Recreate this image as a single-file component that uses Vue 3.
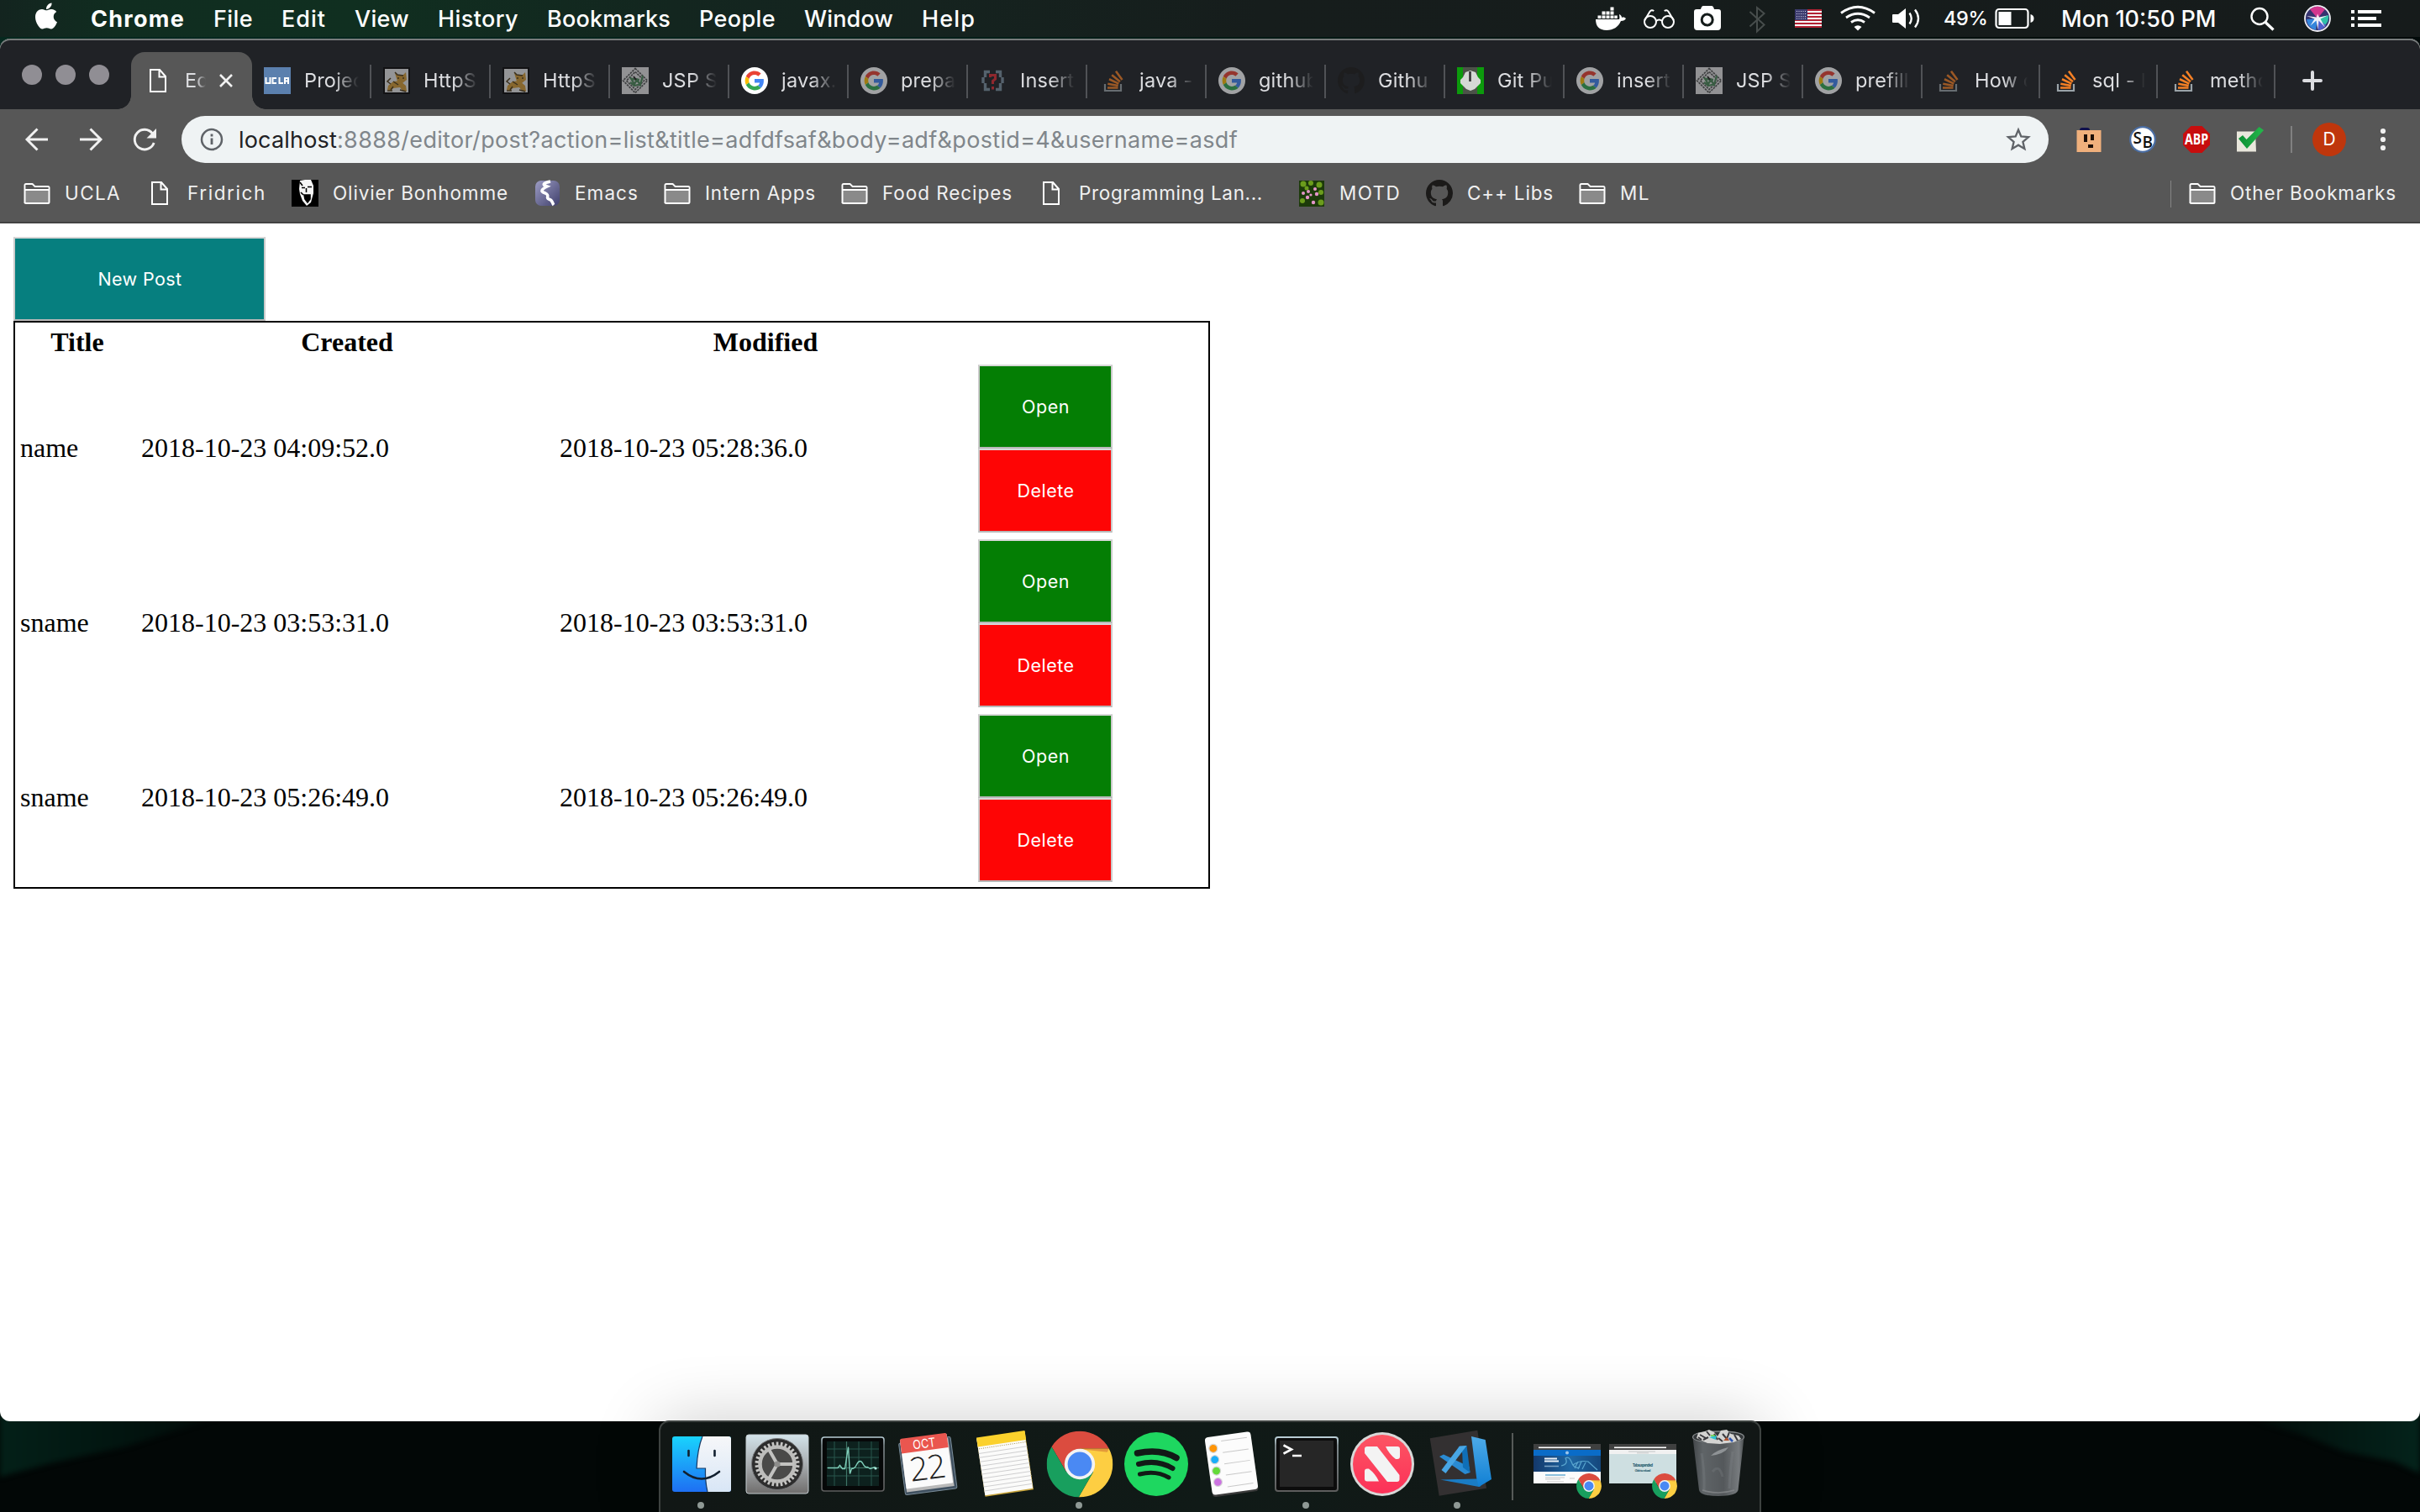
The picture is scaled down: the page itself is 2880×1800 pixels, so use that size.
<script setup>
const menus = [
  { label: 'Chrome', w: 112 },
  { label: 'File', w: 47 },
  { label: 'Edit', w: 53 },
  { label: 'View', w: 65 },
  { label: 'History', w: 96 },
  { label: 'Bookmarks', w: 147 },
  { label: 'People', w: 91 },
  { label: 'Window', w: 106 },
  { label: 'Help', w: 64 },
]

const tabs = [
  { icon: 'ucla', label: 'Projec' },
  { icon: 'tomcat', label: 'HttpS', dim: true },
  { icon: 'tomcat', label: 'HttpS', dim: true },
  { icon: 'diamond', label: 'JSP S', dim: true },
  { icon: 'google', label: 'javax.' },
  { icon: 'google', label: 'prepa', dim: true },
  { icon: 'brackets', label: 'Insert', dim: true },
  { icon: 'stack', label: 'java -', dim: true },
  { icon: 'google', label: 'github', dim: true },
  { icon: 'github', label: 'Githu', dim: true },
  { icon: 'power', label: 'Git Pu' },
  { icon: 'google', label: 'insert', dim: true },
  { icon: 'diamond', label: 'JSP S', dim: true },
  { icon: 'google', label: 'prefill', dim: true },
  { icon: 'stack', label: 'How c', dim: true, narrow: true },
  { icon: 'stack', label: 'sql - I', narrow: true },
  { icon: 'stack', label: 'metho', narrow: true },
]

const bookmarks = [
  { icon: 'folder', label: 'UCLA', w: 67 },
  { icon: 'page', label: 'Fridrich', w: 94 },
  { icon: 'face', label: 'Olivier Bonhomme', w: 209 },
  { icon: 'emacs', label: 'Emacs', w: 76 },
  { icon: 'folder', label: 'Intern Apps', w: 132 },
  { icon: 'folder', label: 'Food Recipes', w: 155 },
  { icon: 'page', label: 'Programming Lan...', w: 219, wide: true },
  { icon: 'flowers', label: 'MOTD', w: 73 },
  { icon: 'github', label: 'C++ Libs', w: 103 },
  { icon: 'folder', label: 'ML', w: 36 },
]

const posts = [
  { title: 'name', created: '2018-10-23 04:09:52.0', modified: '2018-10-23 05:28:36.0' },
  { title: 'sname', created: '2018-10-23 03:53:31.0', modified: '2018-10-23 03:53:31.0' },
  { title: 'sname', created: '2018-10-23 05:26:49.0', modified: '2018-10-23 05:26:49.0' },
]

// Tunes letter spacing so that a label takes the given advance width.
const vFit = {
  mounted(el, { value }) {
    const w = el.getBoundingClientRect().width
    el.style.letterSpacing = (value - w) / el.textContent.length + 'px'
  },
}

const gearTeeth = Array.from({ length: 30 }, (_, i) => i * 12)
</script>

<template>
  <div class="desktop">
    <svg class="defs" width="0" height="0">
      <defs>
        <linearGradient id="gFinderL" x1="0" y1="0" x2="0" y2="1"><stop offset="0" stop-color="#19d3fd" /><stop offset="1" stop-color="#1e6ff3" /></linearGradient>
        <linearGradient id="gFinderR" x1="0" y1="0" x2="0" y2="1"><stop offset="0" stop-color="#f6f7f9" /><stop offset="1" stop-color="#d8e6f6" /></linearGradient>
        <linearGradient id="gPrefs" x1="0" y1="0" x2="0" y2="1"><stop offset="0" stop-color="#d3e3ea" /><stop offset=".5" stop-color="#a9aeb1" /><stop offset="1" stop-color="#6f6d6c" /></linearGradient>
        <linearGradient id="gFrame" x1="0" y1="0" x2="0" y2="1"><stop offset="0" stop-color="#b9ced6" /><stop offset=".15" stop-color="#7f8a8e" /><stop offset="1" stop-color="#5d5d5d" /></linearGradient>
        <linearGradient id="gNews" x1="0" y1="0" x2="0" y2="1"><stop offset="0" stop-color="#fc5563" /><stop offset="1" stop-color="#fc3158" /></linearGradient>
        <linearGradient id="gVs" x1="0" y1="0" x2="0" y2="1"><stop offset="0" stop-color="#4daae8" /><stop offset="1" stop-color="#1180d4" /></linearGradient>
        <linearGradient id="gTrash" x1="0" y1="0" x2="1" y2="0"><stop offset="0" stop-color="#43474a" /><stop offset=".2" stop-color="#5f6467" /><stop offset=".6" stop-color="#54585b" /><stop offset=".9" stop-color="#777b7e" /><stop offset="1" stop-color="#4a4e50" /></linearGradient>
        <linearGradient id="gEmacs" x1="0" y1="0" x2="1" y2="1"><stop offset="0" stop-color="#9c9cc4" /><stop offset="1" stop-color="#40406c" /></linearGradient>
        <linearGradient id="gHero" x1="0" y1="0" x2="1" y2="0"><stop offset="0" stop-color="#14396b" /><stop offset=".55" stop-color="#1f67a4" /><stop offset="1" stop-color="#15477c" /></linearGradient>
        <linearGradient id="gCheck" x1="0" y1="0" x2="1" y2="0"><stop offset="0" stop-color="#0c8f33" /><stop offset="1" stop-color="#25b84c" /></linearGradient>
        <linearGradient id="gHillL" x1="0" y1="0" x2="1" y2="0"><stop offset="0" stop-color="#032018" /><stop offset="1" stop-color="#020a08" /></linearGradient>
        <linearGradient id="gHillR" x1="0" y1="0" x2="1" y2="0"><stop offset="0" stop-color="#020a08" /><stop offset="1" stop-color="#04231b" /></linearGradient>
      </defs>
      <symbol id="i-chrome" viewBox="-1 -1 2 2">
        <path fill="#db4c3f" d="M0-.47H.88A1 1 0 0 0-.847-.527L-.407.235Z" />
        <path fill="#fdce42" d="M.88-.47A1 1 0 0 1-.033.997L.407.235 0-.47Z" />
        <path fill="#189f5e" d="M-.033.997A1 1 0 0 1-.847-.527L-.407.235H.407Z" />
        <path fill="#b5382c" opacity=".35" d="M0-.47H.88L.83-.36.1-.44Z" />
        <circle r=".46" fill="#f3f3f3" /><circle r=".365" fill="#4a89f3" />
      </symbol>
      <symbol id="i-google" viewBox="0 0 32 32">
        <circle cx="16" cy="16" r="16" fill="#fff" />
        <g transform="translate(4.6 4.6) scale(.475)">
          <path fill="#ea4335" d="M24 9.500c3.540 0 6.710 1.220 9.210 3.600l6.850-6.850C35.900 2.380 30.470 0 24 0 14.620 0 6.510 5.380 2.560 13.220l7.980 6.190C12.430 13.720 17.740 9.500 24 9.500z" />
          <path fill="#4285f4" d="M46.980 24.550c0-1.570-.15-3.090-.38-4.550H24v9.020h12.940c-.58 2.960-2.260 5.480-4.780 7.180l7.730 6c4.510-4.180 7.090-10.360 7.090-17.650z" />
          <path fill="#fbbc05" d="M10.530 28.590c-.48-1.450-.76-2.990-.76-4.590s.27-3.140.76-4.590l-7.980-6.190C.92 16.460 0 20.120 0 24c0 3.880.92 7.540 2.560 10.780l7.970-6.190z" />
          <path fill="#34a853" d="M24 48c6.480 0 11.930-2.130 15.890-5.810l-7.730-6c-2.150 1.450-4.920 2.300-8.160 2.300-6.260 0-11.570-4.220-13.470-9.910l-7.980 6.190C6.510 42.620 14.620 48 24 48z" />
        </g>
      </symbol>
      <symbol id="i-github" viewBox="0 0 16 16">
        <path fill="#1b1a19" d="M8 0C3.580 0 0 3.580 0 8c0 3.540 2.290 6.530 5.470 7.590.4.07.55-.17.55-.38 0-.19-.01-.82-.01-1.490-2.010.37-2.530-.49-2.690-.94-.09-.23-.48-.94-.82-1.130-.28-.15-.68-.52-.01-.53.63-.01 1.080.58 1.230.82.72 1.210 1.870.87 2.330.66.07-.52.28-.87.51-1.070-1.780-.2-3.640-.89-3.640-3.950 0-.87.31-1.590.82-2.150-.08-.2-.36-1.020.08-2.120 0 0 .67-.21 2.200.82.64-.18 1.320-.27 2-.27s1.360.09 2 .27c1.530-1.040 2.200-.82 2.200-.82.44 1.100.16 1.920.08 2.120.51.56.82 1.270.82 2.150 0 3.070-1.870 3.750-3.650 3.950.29.25.54.73.54 1.480 0 1.070-.01 1.930-.01 2.200 0 .21.15.46.55.38A8.010 8.010 0 0 0 16 8c0-4.420-3.580-8-8-8z" />
      </symbol>
      <symbol id="i-stack" viewBox="0 0 32 32">
        <path d="M7 20v8h19v-8" fill="none" stroke="#9aa3a8" stroke-width="2.200" />
        <g stroke="#f58025" stroke-width="2.600"><path d="M10 24.500h12.500M10.300 19.700l12.400 2.300M12 14.300l11.400 5.300M15.200 9.300l9.700 8M20 4.800l7.500 10.200" /></g>
      </symbol>
      <symbol id="i-ucla" viewBox="0 0 32 32">
        <rect width="32" height="32" fill="#5b80ae" />
        <g fill="none" stroke="#fff" stroke-width="2"><path d="M2.500 12v7h5v-7M15 13h-4.500v6H15M18.500 12v7h4.500M25 20v-7h4v7M25 16.500h4" /></g>
      </symbol>
      <symbol id="i-tomcat" viewBox="0 0 32 32">
        <rect width="32" height="32" fill="#080808" /><rect x="2" y="2" width="28" height="28" fill="#e9e9e9" />
        <path d="M14 7l3 2h7l3-3 1 9-5 4-6-2zM6 22l6-5 8-1 7 6 1 7-5-1-3-4-8 1-3 3-4-1z" fill="#d29a34" /><path d="M14 6l3 3 7 1M9 13l-4 4 4 3M17 13h2M23 13h2M9 27l3-4M5 28h6M20 27l7 2M12 17l6 4" fill="none" stroke="#4d3a17" stroke-width="1.500" />
      </symbol>
      <symbol id="i-diamond" viewBox="0 0 32 32">
        <rect width="32" height="32" fill="#e4e4e4" />
        <path d="M16 1.500L30.500 16 16 30.500 1.500 16zM16 5.500L26.500 16 16 26.500 5.500 16z" fill="none" stroke="#555" stroke-width="1.700" stroke-dasharray="2.500 1" />
        <path d="M10 12l5 8 3-5 4 6 3-11M10 18l5 4 8-2M12 14l9 1" fill="none" stroke="#4c8758" stroke-width="2.300" /><path d="M14 11l3 4" stroke="#222" stroke-width="2" />
      </symbol>
      <symbol id="i-brackets" viewBox="0 0 32 32">
        <path d="M12 5.500H6.500V12M6.500 19v7.500H12M19 5.500h5.500V12M24.500 19v7.500H19M4 12v7M27 12v7" fill="none" stroke="#7c90a0" stroke-width="3.400" />
        <path d="M12.500 12V9.500h6V14l-3 2.500V20M15.500 23v3.500" fill="none" stroke="#e02d35" stroke-width="3" />
      </symbol>
      <symbol id="i-power" viewBox="0 0 32 32">
        <rect width="32" height="32" fill="#0c9a0c" /><rect x="7" width="17" height="32" fill="#4c5248" />
        <path d="M10 6l6-2 6 2 3 6 3 3v4l-3 3-4 4-5 2-5-2-4-4-3-3v-4l3-3z" fill="#d5d8d5" /><path d="M15.500 5v12" stroke="#333" stroke-width="2.600" />
      </symbol>
      <symbol id="i-folder" viewBox="0 0 32 32">
        <path d="M1.500 28V6.500Q1.500 5 3 5H10.500l3 3h15.500Q30.500 8 30.500 9.500V26.500Q30.500 28 29 28H3Q1.500 28 1.500 26.500M1.500 12H30.500" fill="#8a8a8a" stroke="#fff" stroke-width="2" stroke-linejoin="round" />
        <path d="M2.600 6H10l3 3h16.500v2H2.600z" fill="#575757" />
      </symbol>
      <symbol id="i-page" viewBox="0 0 32 32">
        <path d="M7 3h11l7 8v18H7zM17.500 3v8.500H25" fill="none" stroke="#fff" stroke-width="2" />
      </symbol>
      <symbol id="i-face" viewBox="0 0 32 32">
        <rect width="32" height="32" fill="#000" />
        <path d="M10 1l6-1h7l3 7v9l-3 11-5 4-5-6-3-8-1-6z" fill="#f5f5f5" /><path d="M12 9.500h4M19 8.500h5M15 18h7v5l-3 4-3-4zM10 3l3 4M17.500 10v5M11 15l3 3" fill="#000" stroke="#000" stroke-width="1.600" />
      </symbol>
      <symbol id="i-emacs" viewBox="0 0 32 32">
        <rect x="2" y="1" width="29" height="30" rx="7" fill="url(#gEmacs)" />
        <path d="M20 2c-9 2-10 4-4 6-6 3-9 6-2 8 6 3 0 5 4 7 5 1 4 5 6 7" fill="none" stroke="#fff" stroke-width="3.600" />
      </symbol>
      <symbol id="i-flowers" viewBox="0 0 32 32">
        <rect x="1" y="1" width="30" height="31" fill="#1c3a0a" />
        <g fill="#6b9c1c"><circle cx="6" cy="5" r="3.500" /><circle cx="15" cy="4" r="3" /><circle cx="25" cy="6" r="3.500" /><circle cx="27" cy="15" r="3" /><circle cx="5" cy="25" r="3" /><circle cx="27" cy="27" r="3.500" /><circle cx="10" cy="10" r="2.500" /></g>
        <g fill="#e495c8"><circle cx="6" cy="16" r="2" /><circle cx="12" cy="14" r="2" /><circle cx="20" cy="11" r="2" /><circle cx="11" cy="21" r="2.200" /><circle cx="22" cy="17" r="2.200" /><circle cx="18" cy="27" r="2.200" /><circle cx="15" cy="18" r="1.600" /></g>
      </symbol>
    </svg>

    <svg class="hills" width="2880" height="120" viewBox="0 1680 2880 120">
      <path d="M0 1680h280l-130 42-90 20-60 16z" fill="url(#gHillL)" />
      <path d="M2660 1680h220v74l-30-14-60-12-50-20-40-12z" fill="url(#gHillR)" />
    </svg>

    <header class="menubar">
      <svg class="apple" width="26" height="32" viewBox="4 32 376 448"><path fill="#fff" d="M318.700 268.700c-.2-36.700 16.400-64.400 50-84.800-18.800-26.900-47.200-41.700-84.700-44.600-35.500-2.800-74.300 20.700-88.500 20.700-15 0-49.400-19.700-76.400-19.700C63.300 141.200 4 184.800 4 273.500q0 39.300 14.400 81.200c12.800 36.700 59 126.700 107.200 125.200 25.200-.6 43-17.900 75.800-17.900 31.800 0 48.300 17.900 76.400 17.900 48.600-.7 90.400-82.500 102.600-119.300-65.200-30.700-61.700-90-61.700-91.900zm-56.600-164.200c27.300-32.400 24.800-61.900 24-72.500-24.100 1.400-52 16.400-67.900 34.900-17.500 19.800-27.800 44.300-25.600 71.900 26.100 2 49.900-11.400 69.500-34.300z" /></svg>
      <nav class="menus">
        <span v-for="m in menus" :key="m.label" v-fit="m.w" class="menu">{{ m.label }}</span>
      </nav>
      <div class="status">
        <svg width="423" height="44" viewBox="1890 0 423 44" fill="none" stroke="#fff" stroke-width="2">
          <g fill="#fff" stroke="none">
            <path d="M1899 23h28c1-2 0-4 0-6 2 1 3 2 3 4 2-1 4 0 5 1-1 2-3 3-6 3-3 7-9 11-17 11-9 0-13-5-13-13z" />
            <path d="M1901.500 18.500h4v3.500h-4zM1906.500 18.500h4v3.500h-4zM1911.500 18.500h4v3.500h-4zM1916.500 18.500h4v3.500h-4zM1921.300 18.500h3.500v3.500h-3.500zM1906.500 13.500h4v4h-4zM1911.500 13.500h4v4h-4zM1916.500 13.500h4v4h-4zM1916.500 8.500h4v4h-4z" />
            <path d="M2019 11h5q1-4 3-4h10q2 0 3 4h5q3 0 3 3v18q0 4-4 4h-24q-4 0-4-4V14q0-3 3-3z" />
          </g>
          <circle cx="2031.700" cy="23.500" r="6.500" stroke="#151c1b" stroke-width="3" />
          <circle cx="1964" cy="26" r="7" /><circle cx="1985" cy="26" r="7" />
          <path d="M1971 25q3.500-3 7 0M1957.300 24l6-10q2-3 5-1M1991.700 24l-6-10q-2-3-5-1" />
          <path d="M2082.500 14l17 15.500-8.500 8V9l8.500 7-17 15.500" stroke="#474d4c" />
          <g stroke="none">
            <path fill="#f7f7f7" d="M2136 11h32v22h-32z" /><path fill="#b22234" d="M2136 11h32v2h-32zM2136 15h32v2h-32zM2136 19h32v2h-32zM2136 23h32v2h-32zM2136 27h32v2h-32zM2136 31h32v2h-32z" />
            <path fill="#3c3b6e" d="M2136 11h15v13h-15z" />
          </g>
          <path d="M2138 13.500h12M2138 16.500h12M2138 19.500h12M2138 22h12" stroke="#cfcfe4" stroke-width="1" stroke-dasharray="1 1.500" />
          <g stroke-width="2.800"><path d="M2191 15.500q20-14.500 40 0M2197 21q14-9.500 28 0M2203 26.500q8-5.500 16 0" /></g>
          <path d="M2206.500 32q4.500-3.500 9 0l-4.500 4.500z" fill="#fff" stroke="none" />
          <path d="M2252 18q0-1 1-1h6l9-7v24l-9-7h-6q-1 0-1-1z" fill="#fff" stroke="none" />
          <path d="M2272.500 15.500q4.500 6.500 0 13M2279 11.500q8 10.500 0 21" stroke-width="2.300" />
        </svg>
        <span v-fit="52" class="pct">49%</span>
        <svg width="87" height="44" viewBox="2366 0 87 44"><rect x="2375.500" y="11" width="38" height="22" rx="3.500" fill="none" stroke="#fff" stroke-width="2.200" /><path fill="#fff" d="M2378.500 14h15v16h-15zM2416.500 17q4 1 4 5t-4 5z" /></svg>
        <span v-fit="187" class="clock">Mon 10:50 PM</span>
        <svg width="200" height="44" viewBox="2640 0 200 44">
          <circle cx="2689" cy="19.500" r="9.500" fill="none" stroke="#fff" stroke-width="2.400" /><path d="M2696 26.500l9.500 9" stroke="#fff" stroke-width="3.200" />
          <circle cx="2758" cy="22" r="15" fill="#35336f" stroke="#ececf2" stroke-width="1.800" />
          <path d="M2758 22l-9-11q9-7 18 0z" fill="#d3368e" /><path d="M2758 22l13-4q1 7-4 12z" fill="#2fc0a8" /><path d="M2758 22l-13 1q1 10 11 13z" fill="#3486dc" /><path d="M2758 22l1 14q6-1 9-6z" fill="#5161cf" /><path d="M2745 19l12 1.500 1-4 2 4 10-2-8.500 4 5.500 10-7.500-8-1 11-2-11-7 6 5-8z" fill="#fff" opacity=".9" />
          <path fill="#fff" d="M2798 12h4v4h-4zM2806 12h28v4h-28zM2798 20h4v4h-4zM2806 20h22v4h-22zM2798 28h4v4h-4zM2806 28h28v4h-28z" />
        </svg>
      </div>
    </header>

    <main class="window">
      <div class="tabstrip">
        <div class="lights"><i /><i /><i /></div>
        <div class="tab active">
          <svg width="32" height="32"><use href="#i-page" /></svg>
          <span class="tabtext">Ed</span>
          <svg width="18" height="18" viewBox="0 0 18 18"><path d="M2 2l14 14M16 2L2 16" stroke="#f1f1f1" stroke-width="2.600" /></svg>
        </div>
        <div v-for="(t, i) in tabs" :key="i" class="tab" :class="{ narrow: t.narrow }">
          <svg width="32" height="32" :class="{ dim: t.dim }"><use :href="'#i-' + t.icon" /></svg>
          <span class="tabtext">{{ t.label }}</span>
        </div>
        <svg class="plus" width="24" height="24" viewBox="0 0 24 24"><path d="M12 2v20M2 12h20" stroke="#dcdde1" stroke-width="4" stroke-linecap="round" /></svg>
      </div>

      <div class="toolbar">
        <svg width="216" height="72" viewBox="0 130 216 72" fill="none" stroke="#f1f1f1" stroke-width="2.900">
          <path d="M57 166H33M44.500 153.500L32 166l12.500 12.500M95 166h24M107.500 153.500L120 166l-12.500 12.500" />
          <path d="M181.500 159a11.800 11.800 0 1 0 1.700 11" /><path d="M186 153v11.500H174.500z" fill="#f1f1f1" stroke="none" />
        </svg>
        <div class="omnibox">
          <svg width="28" height="28" viewBox="0 0 28 28"><circle cx="14" cy="14" r="12" fill="none" stroke="#5f6368" stroke-width="2.500" /><path d="M14 12.500V20M14 7.500v3" stroke="#5f6368" stroke-width="2.800" /></svg>
          <span class="url"><span v-fit="117" class="host">localhost</span><span v-fit="1072" class="path">:8888/editor/post?action=list&amp;title=adfdfsaf&amp;body=adf&amp;postid=4&amp;username=asdf</span></span>
          <svg class="star" width="32" height="32" viewBox="0 0 32 32"><path d="M16 4.500l3.300 8 8.700.7-6.600 5.600 2 8.400L16 22.700l-7.400 4.500 2-8.400L4 13.200l8.700-.7z" fill="none" stroke="#5f6368" stroke-width="2.300" /></svg>
        </div>
        <svg width="288" height="72" viewBox="2438 130 288 72">
          <path d="M2475 155q0-3 3-3h6q3 0 3 3z" fill="#10104c" /><path fill="#f0b07c" d="M2471.500 155h29v26h-29z" /><path fill="#1d0f08" d="M2480 160h4v9h-4zM2488 160h4v7h-4zM2485 172h6v4h-6z" />
          <circle cx="2550" cy="166" r="14.800" fill="#fff" stroke="#4b6ea4" stroke-width="2.200" />
          <text x="2538.500" y="171" class="sb">S</text><text x="2549.500" y="175.500" class="sb">B</text>
          <path d="M2607.500 150h13l9.500 9.500v13l-9.500 9.500h-13l-9.500-9.500v-13z" fill="#c70d0d" />
          <text x="2614" y="172" class="abp" text-anchor="middle" textLength="28" lengthAdjust="spacingAndGlyphs">ABP</text>
          <path d="M2662 156.500h22l1 24h-23z" fill="#e9e7dc" /><path d="M2664 165l5-4 4.500 5 15-15 5.500 4-20 22z" fill="url(#gCheck)" />
        </svg>
        <span class="tbsep" />
        <span class="avatar">D</span>
        <svg class="dots" width="8" height="28" viewBox="0 0 8 28"><g fill="#f1f1f1"><circle cx="4" cy="4" r="3.100" /><circle cx="4" cy="14" r="3.100" /><circle cx="4" cy="24" r="3.100" /></g></svg>
      </div>

      <div class="bookmarks">
        <div v-for="b in bookmarks" :key="b.label" class="bm" :class="{ wide: b.wide }">
          <svg width="32" height="32"><use :href="'#i-' + b.icon" /></svg>
          <span v-fit="b.w">{{ b.label }}</span>
        </div>
        <span class="bmsep" />
        <div class="bm other">
          <svg width="32" height="32"><use href="#i-folder" /></svg>
          <span v-fit="198">Other Bookmarks</span>
        </div>
      </div>

      <section class="page">
        <button class="btn new"><span v-fit="101">New Post</span></button>
        <table class="posts">
          <colgroup><col class="c1" /><col class="c2" /><col class="c2" /><col class="c3" /></colgroup>
          <thead><tr><th>Title</th><th>Created</th><th>Modified</th><th></th></tr></thead>
          <tbody>
            <tr v-for="(p, i) in posts" :key="i">
              <td>{{ p.title }}</td>
              <td>{{ p.created }}</td>
              <td>{{ p.modified }}</td>
              <td class="actions">
                <button class="btn open"><span v-fit="58">Open</span></button>
                <button class="btn del"><span v-fit="69">Delete</span></button>
              </td>
            </tr>
          </tbody>
        </table>
      </section>
    </main>

    <footer class="dock">
      <!-- Finder -->
      <svg viewBox="790 1693 90 107">
        <rect x="800" y="1710" width="70" height="66" rx="3" fill="url(#gFinderL)" />
        <path d="M836 1710h31q3 0 3 3v60q0 3-3 3h-25q-3-13-2.500-28h-10.500q1-23 7-38z" fill="url(#gFinderR)" />
        <path d="M836 1710q-6 15-7 38h10.500q-.5 15 2.500 28" fill="none" stroke="#173a66" stroke-width="1.200" />
        <path d="M819.500 1727v6M850.500 1727v6M814 1752q21 17 42 0" fill="none" stroke="#12202f" stroke-width="2.600" stroke-linecap="round" />
        <circle class="run" cx="834" cy="1792" r="4" />
      </svg>
      <!-- System Preferences -->
      <svg viewBox="880 1693 90 107">
        <rect x="888" y="1708" width="74" height="70" rx="3" fill="url(#gPrefs)" stroke="#c5cdd1" stroke-width="1" />
        <circle cx="925" cy="1743" r="30.500" fill="#2d2d2d" stroke="#77797b" stroke-width="1" />
        <g fill="#c6c6c4"><rect v-for="a in gearTeeth" :key="a" x="923.700" y="1716.500" width="2.700" height="6" :transform="`rotate(${a} 925 1743)`" /></g>
        <circle cx="925" cy="1743" r="20.500" fill="#4a4a49" stroke="#bdbdbb" stroke-width="4.500" />
        <path d="M925 1743h20M925 1743l-10-17.500M925 1743l-10 17.500" stroke="#c2c2c0" stroke-width="4" /><circle cx="925" cy="1743" r="3.600" fill="#8d8d8b" />
      </svg>
      <!-- Activity Monitor -->
      <svg viewBox="970 1693 90 107">
        <rect x="978" y="1711" width="74" height="64" rx="3" fill="#060808" stroke="url(#gFrame)" stroke-width="1.600" />
        <rect x="984" y="1716" width="62" height="53" fill="#0d211e" />
        <path d="M984 1725h62M984 1735h62M984 1757h62M993 1716v53M1022 1716v53M1037 1716v53" stroke="#28564c" stroke-width="1" /><path d="M984 1747.500h62M1007.500 1716v53" stroke="#3f7567" stroke-width="1.200" />
        <path d="M985 1747.500h12l2.500-3 3 4h3l4-26 2 32 2-6q4 0 6-5 4-8 8 0 2 4 5 3l3 2 6-2" fill="none" stroke="#7fcfba" stroke-width="1.400" /><circle cx="1042" cy="1748" r="1.600" fill="#b5f5e4" />
      </svg>
      <!-- Calendar -->
      <svg viewBox="1060 1693 90 107">
        <g transform="rotate(-7.500 1104 1743)">
          <rect x="1073" y="1714" width="62" height="62" rx="2" fill="#3f5060" stroke="#7a8c99" stroke-width="1" />
          <rect x="1075" y="1715" width="57" height="58" fill="#b9b9b9" /><rect x="1075" y="1710" width="56" height="59" rx="1" fill="#fbfbfb" />
          <path d="M1075 1711q0-2 2-2h52q2 0 2 2v15.500h-56z" fill="#ea564f" />
          <text x="1103" y="1723.500" class="oct" text-anchor="middle" textLength="27" lengthAdjust="spacingAndGlyphs">OCT</text>
          <text x="1103" y="1761" class="day" text-anchor="middle">22</text>
        </g>
      </svg>
      <!-- Notes -->
      <svg viewBox="1150 1693 90 107">
        <g transform="rotate(-8.500 1195.500 1742.500)">
          <rect x="1167" y="1708" width="58" height="70" fill="#c9a63c" /><rect x="1167" y="1708" width="57.500" height="68.500" fill="#fbfbfa" />
          <path d="M1167 1707h58v11h-58z" fill="#fbd12c" />
          <path d="M1167 1726h58M1167 1731h58M1167 1736h58M1167 1741h58M1167 1746h58M1167 1751h58M1167 1756h58M1167 1761h58M1167 1766h58M1167 1771h58" stroke="#cfcfd0" stroke-width="1" /><path d="M1168 1720.500h56" stroke="#a58f46" stroke-width="1" stroke-dasharray="1 1.500" />
        </g>
      </svg>
      <!-- Chrome -->
      <svg viewBox="1240 1693 90 107"><use href="#i-chrome" x="1245.500" y="1703.500" width="79" height="79" /><circle class="run" cx="1284" cy="1792" r="4" /></svg>
      <!-- Spotify -->
      <svg viewBox="1330 1693 90 107">
        <circle cx="1376" cy="1743" r="38" fill="#1ed760" />
        <g fill="none" stroke="#121a16" stroke-linecap="round"><path d="M1353.500 1730q27-6 46.500 5.500" stroke-width="7.500" /><path d="M1355 1743q22-6 40.500 5" stroke-width="6" /><path d="M1356.500 1755q19-5 34.500 4" stroke-width="5" /></g>
      </svg>
      <!-- Reminders -->
      <svg viewBox="1420 1693 90 107">
        <g transform="rotate(-8 1465.500 1742)">
          <rect x="1438" y="1709" width="55" height="70" rx="4" fill="#3b3b3b" /><rect x="1438" y="1707.500" width="55" height="69" rx="4" fill="#fcfcfc" />
          <path d="M1457 1714h31M1457 1728h31M1457 1741.500h31M1457 1755h31M1457 1769h31" stroke="#c9c9c9" stroke-width="1" />
          <g stroke="#d8d8d8" stroke-width="1.200"><circle cx="1446.500" cy="1721.500" r="5" fill="#ff9507" /><circle cx="1446.500" cy="1735" r="5" fill="#1badf8" /><circle cx="1446.500" cy="1748.500" r="5" fill="#63da38" /><circle cx="1446.500" cy="1762" r="5" fill="#cc73e1" /></g>
        </g>
      </svg>
      <!-- Terminal -->
      <svg viewBox="1510 1693 90 107">
        <rect x="1518" y="1711" width="74" height="64" rx="3" fill="#0c0c0c" stroke="url(#gFrame)" stroke-width="2" /><rect x="1523" y="1715" width="64" height="55" fill="#262626" />
        <path d="M1527.500 1720.500l9.500 5-9.500 5M1538 1733h11" fill="none" stroke="#fff" stroke-width="2.600" /><circle class="run" cx="1554" cy="1792" r="4" />
      </svg>
      <!-- News -->
      <svg viewBox="1600 1693 90 107">
        <circle cx="1645" cy="1743" r="38" fill="#d8d8d8" /><circle cx="1645" cy="1743" r="35" fill="url(#gNews)" />
        <path d="M1624 1725q0-3 3-3h12l26.500 34v5q0 3-3 3h-11.500L1624 1730zM1649 1722h14q3 0 3 3v9q0 3-3 3h-2q-8-6-12-15zM1641 1763.500h-14q-3 0-3-3v-9q0-3 3-3h2q8 6 12 15z" fill="#f3f3f3" />
      </svg>
      <!-- Visual Studio Code -->
      <svg viewBox="1690 1693 90 107">
        <path d="M1701.700 1712.300l56.600-9.600 10.700 69-56.300 9z" fill="#333031" />
        <path d="M1714 1761.500l43.500-1 5 8.500-2.500 1z" fill="#1a7cc4" /><path d="M1751 1710l16.700 4 7.300 47-15 9-2.700-9.500z" fill="url(#gVs)" />
        <path d="M1713 1734l5-2.500 30.500 14.500 1 7-6 2z" fill="#2a8bd3" /><path d="M1735.500 1722.500l10-1.500 4 32-8.500-6-.8-17z" fill="#0f6fb8" /><path d="M1737 1721.500l8.500-.5-25 33-5-4z" fill="#48a6e5" />
        <circle class="run" cx="1734" cy="1792" r="4" />
      </svg>
      <span class="dsep" />
      <!-- Minimised window -->
      <svg viewBox="1820 1693 90 107">
        <rect x="1825" y="1719" width="80" height="47" fill="#fbfbfb" /><rect x="1825" y="1719" width="80" height="7" fill="#3f4040" /><rect x="1831" y="1722.500" width="62" height="1.600" fill="#fff" /><rect x="1825" y="1726" width="80" height="7" fill="#0a6cc8" /><rect x="1825" y="1733" width="80" height="19" fill="url(#gHero)" />
        <path d="M1838 1736.500h15M1838 1739.500h17" stroke="#eaf1f8" stroke-width="2.200" /><path d="M1838 1745.500h17" stroke="#7da4c6" stroke-width="1.500" /><circle cx="1865" cy="1729.500" r="2" fill="#9cc6ec" />
        <path d="M1858 1745q9-2 5-9 4-3 7 4 3 9 10 7M1874 1748l4-8M1878 1749l4-9M1883 1749l4-8M1872 1744q8-6 18-4l11 10" fill="none" stroke="#5aa6cf" stroke-width="1.200" />
        <path d="M1839 1756h24" stroke="#68add3" stroke-width="1.500" /><path d="M1839 1759h23M1839 1761h18M1841 1764h20M1868 1760h6" stroke="#c9c9c9" stroke-width="1" />
        <use href="#i-chrome" x="1876" y="1754" width="30" height="30" />
      </svg>
      <!-- Minimised window, suspended tab -->
      <svg viewBox="1910 1693 90 107">
        <rect x="1915" y="1719" width="80" height="47" fill="#cedfe1" /><rect x="1915" y="1719" width="80" height="7" fill="#3f4040" /><rect x="1921" y="1722.500" width="62" height="1.600" fill="#fff" /><rect x="1915" y="1726" width="80" height="5" fill="#f1f1f1" />
        <path d="M1938 1728h32M1948 1729.800h14" stroke="#b9bcbe" stroke-width=".8" />
        <text x="1955" y="1745.500" class="mini" text-anchor="middle" textLength="24">Tab suspended</text><text x="1955" y="1751.500" class="mini s" text-anchor="middle" textLength="19">Click to reload</text>
        <use href="#i-chrome" x="1966" y="1754" width="30" height="30" />
      </svg>
      <!-- Trash -->
      <svg viewBox="2000 1693 90 107">
        <path d="M2014.500 1711q30 11 61 0l-7 63q-2 7-23.500 7t-23-7z" fill="url(#gTrash)" />
        <path d="M2014.500 1711q0-7 30.500-7t30.500 7q-1 6-30.500 6t-30.500-6z" fill="#34383a" stroke="#85898b" stroke-width="1.300" />
        <path d="M2019 1712l2-6 8-2 5-2 6 3 4 5 4-7 7-1 5 5 9 2 3 4-9 4-16 2-15-1z" fill="#d4d4d2" /><path d="M2023 1708l7 4M2031 1704l4 5M2050 1707l6 7M2058 1705l-3 8M2064 1708l4 7M2027 1714l6-3M2040 1707l4 7M2045 1712l5 4M2021 1711l4 3" stroke="#3a3a3e" stroke-width="2" /><path d="M2034 1711l9-2-1 5z" fill="#2ec2cf" /><path d="M2036 1709h5" stroke="#5fd43c" stroke-width="1.500" /><path d="M2051 1715l4-4 3 4z" fill="#b0532f" /><path d="M2058 1712l4 4" stroke="#2c55b0" stroke-width="2.500" />
        <path d="M2036 1733q16-2 21-10-14 3-21 10z" fill="#a2a6a8" opacity=".75" /><path d="M2025 1730q4 24 3 44M2062 1728q-3 20-4 44M2038 1752q8-10 12 6" fill="none" stroke="#8e9294" stroke-width="3" opacity=".22" /><path d="M2026 1774q19 6 38 0" fill="none" stroke="#8b8f91" stroke-width="1.600" opacity=".7" />
      </svg>
    </footer>
  </div>
</template>

<style>
html,
body {
  margin: 0;
  background: #020706;
}
</style>

<style scoped>
.desktop {
  width: 2880px;
  height: 1800px;
  overflow: hidden;
  display: flex;
  flex-direction: column;
  position: relative;
  background: linear-gradient(90deg, #06291f 0, #05231c 30%, #03120f 70%, #020a0a 100%) 0 0 / 100% 60px no-repeat, #020706;
  font-family: Inter, "Liberation Sans", sans-serif;
}
.defs { position: absolute; }
.hills { position: absolute; left: 0; bottom: 0; filter: blur(3px); }
svg { display: block; flex: none; }

.menubar {
  height: 44px;
  flex: none;
  display: flex;
  align-items: center;
  color: #fff;
  font-size: 27px;
  font-weight: 500;
  white-space: nowrap;
  background: linear-gradient(90deg, #13241f 0, #102d20 140px, #102f20 420px, #13261f 800px, #15231f 1100px, #161d1c 1500px, #161b1b 100%);
}
.apple { margin: 0 40px 6px 42px; }
.menus { display: flex; gap: 34px; line-height: 44px; padding-top: 1px; }
.menu:first-child { font-weight: 700; }
.status { display: flex; align-items: center; margin-left: 729px; line-height: 44px; }
.pct { font-size: 23.500px; width: 53px; }
.clock { width: 187px; padding-top: 1px; }

.window {
  position: relative;
  height: 1646px;
  margin-top: 2px;
  flex: none;
  border-radius: 12px;
  overflow: hidden;
  background: #fff;
  display: flex;
  flex-direction: column;
}
.tabstrip {
  height: 84px;
  box-sizing: border-box;
  flex: none;
  display: flex;
  padding-top: 16px;
  background: #202226;
  box-shadow: inset 0 2px #777b7b;
  border-radius: 12px 12px 0 0;
}
.lights { display: flex; gap: 16px; padding: 15px 26px 0; }
.lights i { width: 24px; height: 24px; border-radius: 50%; background: #908e94; }
.tab {
  width: 142px;
  height: 68px;
  flex: none;
  box-sizing: border-box;
  display: flex;
  align-items: center;
  padding-left: 14px;
  background: linear-gradient(#505256, #505256) right 15px / 2px 40px no-repeat;
}
.tab.narrow { width: 140px; }
.tab .dim { opacity: .58; }
.tabtext {
  width: 65px;
  margin-left: 16px;
  overflow: hidden;
  white-space: nowrap;
  font-size: 23.500px;
  line-height: 32px;
  letter-spacing: .2px;
  color: #dcdde0;
  -webkit-mask-image: linear-gradient(90deg, #000 55%, transparent);
  mask-image: linear-gradient(90deg, #000 55%, transparent);
}
.tab.narrow .tabtext { width: 63px; }
.tab.active {
  position: relative;
  width: 144px;
  padding-left: 16px;
  background: #575757;
  border-radius: 16px 16px 0 0;
}
.tab.active .tabtext { width: 25px; }
.tab.active svg:last-child { margin-left: 15px; }
.tab.active::before,
.tab.active::after {
  content: "";
  position: absolute;
  bottom: 0;
  width: 16px;
  height: 16px;
}
.tab.active::before { left: -16px; background: radial-gradient(circle at 0 0, transparent 15.500px, #575757 16px); }
.tab.active::after { right: -16px; background: radial-gradient(circle at 100% 0, transparent 15.500px, #575757 16px); }
.plus { margin: 22px 0 0 32px; }

.toolbar {
  height: 72px;
  flex: none;
  display: flex;
  align-items: center;
  background: #575757;
}
.omnibox {
  width: 2222px;
  height: 56px;
  box-sizing: border-box;
  border-radius: 28px;
  background: #eff3f4;
  display: flex;
  align-items: center;
  padding: 0 20px 0 22px;
}
.url { margin-left: 18px; padding-top: 1px; font-size: 27px; white-space: nowrap; color: #80868b; display: flex; line-height: 40px; }
.host { color: #202124; }
.star { margin-left: auto; }
.sb { font: 600 19px "Open Sans", sans-serif; fill: #101010; }
.abp { font: 700 17px "Open Sans", sans-serif; fill: #fff; }
.tbsep { width: 2px; height: 32px; background: #808080; }
.avatar {
  width: 40px;
  height: 40px;
  margin-left: 24px;
  border-radius: 50%;
  background: #bf360c;
  color: #fff;
  font-size: 21px;
  line-height: 40px;
  text-align: center;
}
.dots { margin-left: 40px; }

.bookmarks {
  height: 64px;
  box-sizing: border-box;
  padding: 0 28px 8px;
  flex: none;
  display: flex;
  align-items: center;
  background: #575757;
  border-bottom: 2px solid #434343;
  color: #f0f0f0;
  font-size: 22.500px;
  line-height: 32px;
}
.bm { display: flex; gap: 17px; margin-right: 30px; padding-top: 2px; white-space: nowrap; }
.bm.wide { margin-right: 42px; }
.bmsep { width: 1px; height: 32px; margin: 4px 21px 0 auto; background: #868686; }
.bm.other { margin-right: 0; }

.page { padding: 16px; font: 32px/36px "Liberation Serif", serif; color: #000; }
.btn {
  display: block;
  box-sizing: border-box;
  height: 100px;
  width: 160px;
  margin: 0;
  padding: 0;
  border: 2px solid #cbcbcb;
  border-top-color: #d8d8d8;
  border-bottom-color: #b8b8b8;
  border-radius: 0;
  color: #fff;
  font: 21.500px Inter, sans-serif;
}
.btn span { padding-left: 1px; }
.new { width: 300px; background: #067f7f; }
.open { background: #047e04; }
.del { background: #fe0505; }
.posts {
  width: 1424px;
  height: 676px;
  table-layout: fixed;
  border: 2px solid #000;
  border-spacing: 4px;
  box-sizing: border-box;
}
.c1 { width: 140px; }
.c2 { width: 494px; }
.c3 { width: 272px; }
.posts th,
.posts td { padding: 1px 2px 3px; white-space: nowrap; }
.posts .actions { padding: 2px; }
.posts th { font-weight: 700; height: 36px; }

.dock {
  position: absolute;
  left: 784px;
  top: 1691px;
  width: 1312px;
  height: 112px;
  box-sizing: border-box;
  border: 2px solid #3d4240;
  border-radius: 12px 12px 0 0;
  background: linear-gradient(90deg, #111715, #101a17 50%, #121716);
  box-shadow: 0 0 80px rgba(0, 0, 0, .2);
  display: flex;
  padding-left: 4px;
}
.dock svg { width: 90px; height: 107px; }
.dsep { width: 2px; height: 80px; margin: 13px 19px 0; background: #565a58; }
.run { fill: #8f9995; }
.oct { font: 400 15px Inter, sans-serif; fill: #fff; }
.day { font: 300 39px "Open Sans", Inter, sans-serif; fill: #222; letter-spacing: -1px; }
.mini { font: 700 4.500px "Open Sans", sans-serif; fill: #2b6070; }
.mini.s { font-size: 3.800px; }
</style>
